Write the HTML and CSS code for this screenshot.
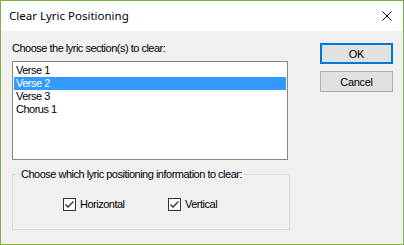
FILE: index.html
```html
<!DOCTYPE html>
<html lang="en">
<head>
    <meta charset="UTF-8">
    <title>Clear Lyric Positioning</title>
    <link rel="stylesheet" href="styles.css">
</head>
<body>

<div class="window">
    <div class="titlebar">
        <span class="title">Clear Lyric Positioning</span>
        <svg class="close" width="10" height="10" viewBox="0 0 10 10">
            <path d="M0.5 0.5 L9.5 9.5 M9.5 0.5 L0.5 9.5" stroke="#000" stroke-width="1" fill="none"/>
        </svg>
    </div>

    <div class="dialog">
        <div class="main">
            <div class="label">Choose the lyric section(s) to clear:</div>
            <div class="listbox">
                <div class="item">Verse 1</div>
                <div class="item selected">Verse 2</div>
                <div class="item">Verse 3</div>
                <div class="item">Chorus 1</div>
            </div>

            <fieldset class="group">
                <legend>Choose which lyric positioning information to clear:</legend>
                <div class="checks">
                    <label class="check">
                        <span class="box">
                            <svg width="11" height="11" viewBox="0 0 11 11">
                                <path d="M1.5 5.5 L4 8 L9.5 2.5" stroke="#333" stroke-width="1.4" fill="none"/>
                            </svg>
                        </span>
                        Horizontal
                    </label>
                    <label class="check">
                        <span class="box">
                            <svg width="11" height="11" viewBox="0 0 11 11">
                                <path d="M1.5 5.5 L4 8 L9.5 2.5" stroke="#333" stroke-width="1.4" fill="none"/>
                            </svg>
                        </span>
                        Vertical
                    </label>
                </div>
            </fieldset>
        </div>

        <div class="buttons">
            <button type="button" class="btn default">OK</button>
            <button type="button" class="btn">Cancel</button>
        </div>
    </div>
</div>

</body>
</html>
```

FILE: styles.css
```css
body {
    margin: 0;
    font-family: "Liberation Sans", Arial, sans-serif;
    font-size: 11px;
    letter-spacing: -0.5px;
    color: #000;
}
.window {
    width: 404px;
    height: 245px;
    box-sizing: border-box;
    border: 1px solid #7cb342;
    background: #f0f0f0;
    display: flex;
    flex-direction: column;
}
.titlebar {
    height: 30px;
    background: #fff;
    display: flex;
    align-items: center;
    justify-content: space-between;
    padding: 0 10px 0 8px;
    flex-shrink: 0;
}
.title {
    font-family: "Noto Sans", sans-serif;
    font-size: 11.5px;
    letter-spacing: 0;
    margin-top: -1px;
}
.close {
    margin-right: 1px;
}
.dialog {
    display: flex;
    padding: 10px 0 0 11px;
}
.main {
    width: 278px;
}
.label {
    line-height: 13px;
    height: 13px;
    padding-top: 1px;
    margin-bottom: 6px;
}
.listbox {
    width: 276px;
    height: 99px;
    box-sizing: border-box;
    border: 1px solid #828790;
    background: #fff;
    padding: 2px 1px 0 1px;
}
.item {
    height: 13px;
    line-height: 13px;
    padding-left: 2px;
}
.item.selected {
    background: #3399ff;
    color: #fff;
}
.group {
    margin: 8px 0 0 0;
    padding: 0;
    height: 62px;
    box-sizing: border-box;
    border: 1px solid #dcdcdc;
    min-width: 0;
}
.group legend {
    padding: 0 2px;
    margin-left: 6px;
    line-height: 13px;
    white-space: nowrap;
}
.checks {
    display: flex;
    padding: 16px 0 0 50px;
}
.check {
    display: flex;
    align-items: center;
    height: 14px;
    line-height: 14px;
}
.check:first-child {
    width: 105px;
}
.box {
    width: 13px;
    height: 13px;
    box-sizing: border-box;
    border: 1px solid #333;
    background: #fff;
    margin-right: 4px;
    display: flex;
    align-items: center;
    justify-content: center;
}
.buttons {
    display: flex;
    flex-direction: column;
    gap: 7px;
    margin-left: 30px;
    padding-top: 2px;
}
.btn {
    width: 73px;
    height: 21px;
    box-sizing: border-box;
    background: #e1e1e1;
    border: 1px solid #adadad;
    font-family: "Liberation Sans", Arial, sans-serif;
    font-size: 11px;
    letter-spacing: -0.3px;
    color: #000;
    padding: 0;
}
.btn.default {
    border: 2px solid #0078d7;
}
```
